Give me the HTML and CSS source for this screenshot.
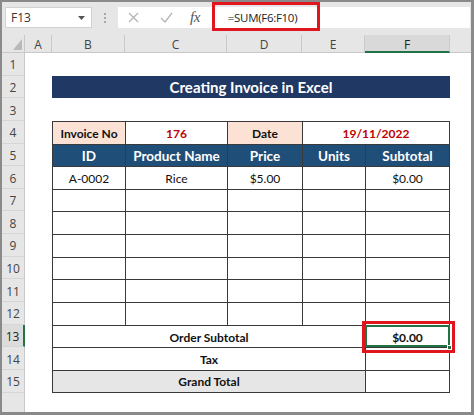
FILE: index.html
```html
<!DOCTYPE html>
<html>
<head>
<meta charset="utf-8">
<link rel="stylesheet" href="styles.css">
</head>
<body>
<div class="app">
  <div class="fbar">
    <div class="namebox"><span>F13</span>
      <svg class="caret" width="7" height="4" viewBox="0 0 7 4"><path d="M0 0H7L3.5 4Z" fill="#555"/></svg>
    </div>
    <div class="dots"><i></i><i></i><i></i></div>
    <div class="finput">
      <svg class="ic-x" width="11" height="11" viewBox="0 0 11 11"><path d="M1 1L10 10M10 1L1 10" stroke="#b4b4b4" stroke-width="1.3" fill="none"/></svg>
      <svg class="ic-ok" width="13" height="11" viewBox="0 0 13 11"><path d="M1 6L5 10L12 1" stroke="#b4b4b4" stroke-width="1.3" fill="none"/></svg>
      <span class="fx">fx</span>
      <span class="ftext">=SUM(F6:F10)</span>
    </div>
  </div>

  <div class="sheet">
    <div class="corner"><svg width="9" height="11" viewBox="0 0 9 11"><path d="M9 0V11H0Z" fill="#b9b9b9"/></svg></div>
    <div class="ch">A</div><div class="ch">B</div><div class="ch">C</div><div class="ch">D</div><div class="ch">E</div><div class="ch chsel">F</div><div class="ch chlast"></div>

    <div class="rh">1</div><div class="blank s7"></div>

    <div class="rh">2</div><div class="blank"></div><div class="title s5">Creating Invoice in Excel</div><div class="blank"></div>

    <div class="rh">3</div><div class="blank s7"></div>

    <div class="rh">4</div><div class="blank"></div>
    <div class="t peach b">Invoice No</div><div class="t red b">176</div><div class="t peach b">Date</div><div class="t red b s2 tr">19/11/2022</div><div class="blank"></div>

    <div class="rh">5</div><div class="blank"></div>
    <div class="t hd">ID</div><div class="t hd">Product Name</div><div class="t hd">Price</div><div class="t hd">Units</div><div class="t hd tr">Subtotal</div><div class="blank"></div>

    <div class="rh">6</div><div class="blank"></div>
    <div class="t">A-0002</div><div class="t">Rice</div><div class="t">$5.00</div><div class="t"></div><div class="t tr">$0.00</div><div class="blank"></div>

    <div class="rh">7</div><div class="blank"></div><div class="t"></div><div class="t"></div><div class="t"></div><div class="t"></div><div class="t tr"></div><div class="blank"></div>
    <div class="rh">8</div><div class="blank"></div><div class="t"></div><div class="t"></div><div class="t"></div><div class="t"></div><div class="t tr"></div><div class="blank"></div>
    <div class="rh">9</div><div class="blank"></div><div class="t"></div><div class="t"></div><div class="t"></div><div class="t"></div><div class="t tr"></div><div class="blank"></div>
    <div class="rh">10</div><div class="blank"></div><div class="t"></div><div class="t"></div><div class="t"></div><div class="t"></div><div class="t tr"></div><div class="blank"></div>
    <div class="rh">11</div><div class="blank"></div><div class="t"></div><div class="t"></div><div class="t"></div><div class="t"></div><div class="t tr"></div><div class="blank"></div>
    <div class="rh">12</div><div class="blank"></div><div class="t"></div><div class="t"></div><div class="t"></div><div class="t"></div><div class="t tr"></div><div class="blank"></div>

    <div class="rh rhsel">13</div><div class="blank"></div>
    <div class="t b s4">Order Subtotal</div><div class="t b tr sel">$0.00</div><div class="blank"></div>

    <div class="rh">14</div><div class="blank"></div>
    <div class="t b s4">Tax</div><div class="t tr"></div><div class="blank"></div>

    <div class="rh">15</div><div class="blank"></div>
    <div class="t b s4 grey tb">Grand Total</div><div class="t tr tb"></div><div class="blank"></div>

    <div class="rh rhend"></div><div class="blank s7"></div>
  </div>

  <div class="redbox fbox"></div>
  <div class="redbox cbox"></div>
  <div class="handle"></div>
</div>
</body>
</html>
```
FILE: styles.css
```css
* { box-sizing: border-box; margin: 0; padding: 0; }
html, body { width: 474px; height: 415px; overflow: hidden; background: #8a8a8a; }

.app {
  position: relative;
  width: 474px;
  height: 415px;
  border-style: solid;
  border-color: #8a8a8a;
  border-width: 2px 3px 3px 2px;
  background: #fff;
  display: flex;
  flex-direction: column;
  font-family: "Open Sans", "Noto Sans", sans-serif;
}

/* formula bar */
.fbar {
  height: 33px;
  flex: none;
  background: #e6e6e6;
  display: flex;
  align-items: flex-start;
  padding: 5px 0 0 3px;
}
.namebox {
  width: 87px;
  height: 21px;
  background: #fff;
  border: 1px solid #d2d2d2;
  display: flex;
  align-items: center;
  justify-content: space-between;
  padding: 0 6px 0 5px;
  font-size: 12px;
  color: #333;
}
.dots {
  width: 26px;
  height: 21px;
  display: flex;
  flex-direction: column;
  align-items: center;
  justify-content: center;
  gap: 2px;
}
.dots i { display: block; width: 2px; height: 2px; background: #a8a8a8; }
.finput {
  flex: 1;
  height: 21px;
  background: #fff;
  display: flex;
  align-items: center;
  margin-right: 1px;
}
.ic-x { margin-left: 10px; }
.ic-ok { margin-left: 21px; }
.fx {
  margin-left: 17px;
  font-family: "Liberation Serif", serif;
  font-style: italic;
  font-size: 15px;
  color: #555;
  letter-spacing: -0.5px;
}
.ftext {
  margin-left: 28px;
  font-size: 11.5px;
  letter-spacing: -0.3px;
  color: #222;
}

/* sheet grid */
.sheet {
  flex: 1;
  display: grid;
  grid-template-columns: 23px 27px 73px 102px 75px 63px 85px 1fr;
  grid-template-rows: 18px repeat(15, 22.65px) 1fr;
  font-family: Lato, "Open Sans", sans-serif;
  font-size: 12px;
  color: #111;
}
.corner {
  background: #e6e6e6;
  border-right: 1px solid #c8c8c8;
  border-bottom: 1px solid #c8c8c8;
  display: flex;
  align-items: flex-end;
  justify-content: flex-end;
  padding: 0 2px 2px 0;
}
.ch {
  background: #e6e6e6;
  border-right: 1px solid #cacaca;
  border-bottom: 1px solid #c8c8c8;
  display: flex;
  align-items: center;
  justify-content: center;
  font-family: "Open Sans", sans-serif;
  font-size: 12px;
  color: #444;
  padding-top: 2px;
}
.chsel { background: #d9d9d9; border-bottom: 2px solid #217346; color: #222; }
.chlast { border-right: none; }
.rh {
  background: #e6e6e6;
  border-right: 1px solid #c8c8c8;
  border-bottom: 1px solid #d6d6d6;
  display: flex;
  align-items: center;
  justify-content: center;
  font-family: "Open Sans", sans-serif;
  font-size: 12px;
  color: #444;
  padding-top: 2px;
}
.rhsel { border-right: 2px solid #217346; background: #dcdcdc; color: #222; }
.rhend { border-bottom: none; }

.blank { background: #fff; }
.s2 { grid-column: span 2; }
.s4 { grid-column: span 4; }
.s5 { grid-column: span 5; }
.s7 { grid-column: span 7; }

.title {
  background: #203864;
  color: #fff;
  font-weight: 700;
  font-size: 15px;
  display: flex;
  align-items: center;
  justify-content: center;
  padding-top: 1px;
}

.t {
  border-top: 1px solid #3a3a3a;
  border-left: 1px solid #3a3a3a;
  display: flex;
  align-items: center;
  justify-content: center;
  background: #fff;
  padding-top: 1px;
}
.tr { border-right: 1px solid #3a3a3a; }
.tb { border-bottom: 1px solid #3a3a3a; }
.b { font-weight: 700; }
.peach { background: #fbe2d5; }
.red { color: #c00000; }
.grey { background: #e7e6e6; }
.hd {
  background: #1f4e79;
  color: #fff;
  font-weight: 700;
  font-size: 13.5px;
}
.sel {
  outline: 2px solid #217346;
  outline-offset: -2px;
}

/* overlays */
.redbox {
  position: absolute;
  border: 3px solid #e0161f;
}
.fbox { left: 210px; top: 0; width: 108px; height: 29px; }
.cbox { left: 360px; top: 319px; width: 93px; height: 32px; }
.handle {
  position: absolute;
  left: 445px;
  top: 343px;
  width: 5px;
  height: 5px;
  background: #217346;
  border: 1px solid #fff;
}
```
